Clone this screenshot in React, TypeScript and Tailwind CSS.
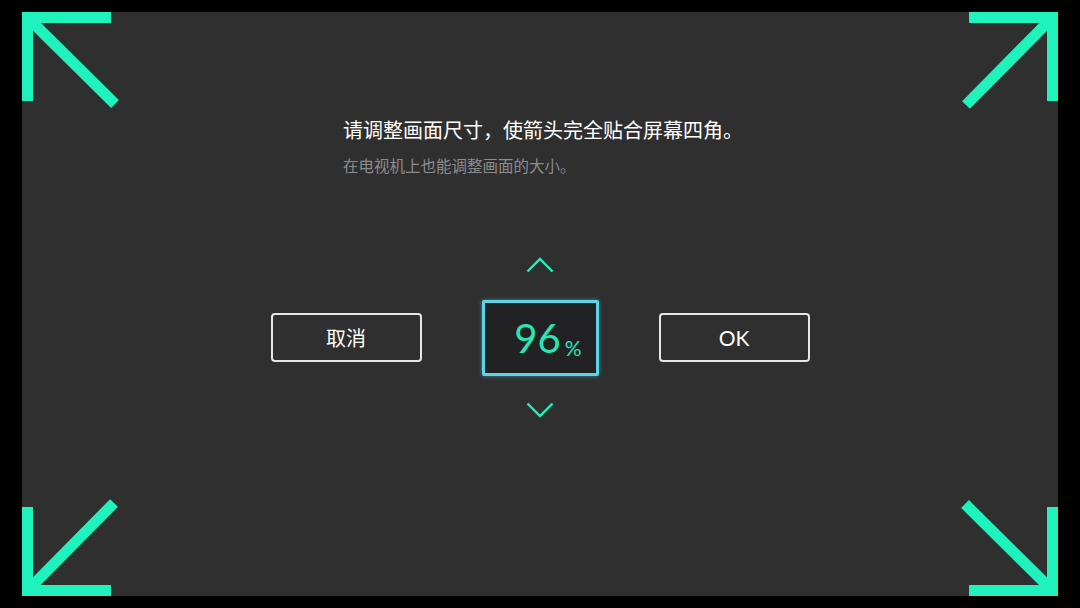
import React from 'react';

const ACCENT = '#1ff2bd';

// Corner arrow drawn for the top-left; other corners are rotated copies
function CornerArrow({ className }: { className: string }) {
  return (
    <svg className={`absolute h-[100px] w-[100px] ${className}`} viewBox="0 0 100 100" aria-hidden="true">
      <rect x="0" y="0" width="89" height="11" fill={ACCENT} />
      <rect x="0" y="0" width="11" height="89" fill={ACCENT} />
      <line x1="5" y1="5" x2="93" y2="92" stroke={ACCENT} strokeWidth="11" />
    </svg>
  );
}

function Chevron({ up }: { up?: boolean }) {
  return (
    <svg width="28" height="16" viewBox="0 0 28 16" fill="none" aria-hidden="true">
      <path
        d={up ? 'M1.5 14.5L14 2L26.5 14.5' : 'M1.5 1.5L14 14L26.5 1.5'}
        stroke={ACCENT}
        strokeWidth="2.4"
      />
    </svg>
  );
}

export default function App() {
  return (
    <div
      className="h-[608px] w-[1080px] bg-black pl-[22px] pt-[12px]"
      style={{ fontFamily: '"Noto Sans CJK SC", "Noto Sans", sans-serif' }}
    >
      <div className="relative flex h-[584px] w-[1036px] flex-col items-center bg-[#2f2f2f]">
        <CornerArrow className="left-0 top-0" />
        <CornerArrow className="right-0 top-0 rotate-90" />
        <CornerArrow className="bottom-0 right-0 rotate-180" />
        <CornerArrow className="bottom-0 left-0 -rotate-90" />

        <div className="mt-[104px] w-[394px] whitespace-nowrap">
          <p className="text-[20px] leading-[28px] text-white">请调整画面尺寸，使箭头完全贴合屏幕四角。</p>
          <p className="mt-[10px] text-[15.5px] leading-[22px] text-[#8c8c8c]">在电视机上也能调整画面的大小。</p>
        </div>

        <div className="mt-[81px] flex items-center gap-[60px]">
          <button className="flex h-[49px] w-[151px] items-center justify-center rounded-[4px] border-2 border-[#e6e6e6] text-[20px] text-white">
            取消
          </button>

          <div className="flex flex-col items-center">
            <Chevron up />
            <div className="mt-[27px] flex h-[76px] w-[117px] items-end justify-end rounded-[2px] border-[3px] border-[#5ad6e6] bg-[#222225] pb-[15px] pr-[14px] text-[#27e8b2] shadow-[0_0_4px_rgba(90,214,230,0.5)]">
              <span className="text-[40px] leading-none" style={{ fontFamily: 'Lato, sans-serif' }}>96</span>
              <span className="ml-[4px] text-[21px] leading-none" style={{ fontFamily: 'Lato, sans-serif' }}>%</span>
            </div>
            <div className="mt-[26px]">
              <Chevron />
            </div>
          </div>

          <button
            className="flex h-[49px] w-[151px] items-center justify-center rounded-[4px] border-2 border-[#e6e6e6] text-[21px] text-white"
            style={{ fontFamily: 'Lato, sans-serif' }}
          >
            OK
          </button>
        </div>
      </div>
    </div>
  );
}
